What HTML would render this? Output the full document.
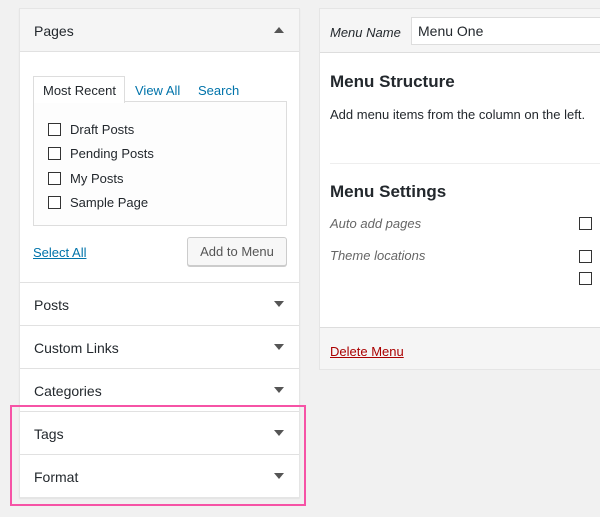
<!DOCTYPE html>
<html><head><style>
*{box-sizing:border-box;margin:0;padding:0}
body{width:600px;height:517px;background:#f1f1f1;font-family:"Liberation Sans",sans-serif;font-size:13px;color:#23282d;position:relative;overflow:hidden}
.a{position:absolute}
.lp{left:19px;top:8px;width:281px;height:490px;background:#fff;border:1px solid #e5e5e5;box-shadow:0 1px 1px rgba(0,0,0,.06)}
.sec{position:absolute;left:0;width:279px;height:43px;border-top:1px solid #e1e1e1;font-size:14px;padding:14px 0 0 14px}
.tri{position:absolute;right:15px;top:18px;width:0;height:0;border-left:5px solid transparent;border-right:5px solid transparent;border-top:6px solid #555}
.cb{position:absolute;width:13px;height:13px;border:1px solid #333;background:#fff}
</style></head><body>
<div class="a lp">
 <div class="a" style="left:0;top:0;width:279px;height:43px;background:#f5f5f5;border-bottom:1px solid #e1e1e1;font-size:14px;padding:14px 0 0 14px">Pages
  <div class="a" style="right:15px;top:18px;border-left:5px solid transparent;border-right:5px solid transparent;border-bottom:6px solid #555"></div></div>
 <div class="a" style="left:13px;top:67px;width:92px;height:27px;border:1px solid #ddd;border-bottom:none;background:#fff;z-index:2;padding:6px 0 0 9px">Most Recent</div>
 <div class="a" style="left:115px;top:74px;color:#0073aa">View All</div>
 <div class="a" style="left:178px;top:74px;color:#0073aa">Search</div>
 <div class="a" style="left:13px;top:92px;width:254px;height:125px;border:1px solid #ddd;background:#fdfdfd">
  <div class="cb" style="left:14px;top:21px"></div><div class="a" style="left:36px;top:20px">Draft Posts</div>
  <div class="cb" style="left:14px;top:45px"></div><div class="a" style="left:36px;top:44px">Pending Posts</div>
  <div class="cb" style="left:14px;top:70px"></div><div class="a" style="left:36px;top:69px">My Posts</div>
  <div class="cb" style="left:14px;top:94px"></div><div class="a" style="left:36px;top:93px">Sample Page</div>
 </div>
 <div class="a" style="left:13px;top:236px;color:#0073aa;text-decoration:underline">Select All</div>
 <div class="a" style="left:167px;top:228px;width:100px;height:29px;border:1px solid #ccc;border-radius:3px;background:#f7f7f7;box-shadow:0 1px 0 #ccc;text-align:center;padding-top:6px;color:#555">Add to Menu</div>
 <div class="sec" style="top:273px">Posts<div class="tri"></div></div>
 <div class="sec" style="top:316px">Custom Links<div class="tri"></div></div>
 <div class="sec" style="top:359px">Categories<div class="tri"></div></div>
 <div class="sec" style="top:402px">Tags<div class="tri"></div></div>
 <div class="sec" style="top:445px">Format<div class="tri"></div></div>
</div>
<div class="a" style="left:10px;top:405px;width:296px;height:101px;border:2px solid #f653a6"></div>
<div class="a" style="left:319px;top:8px;width:290px;height:362px;background:#fff;border:1px solid #e5e5e5">
 <div class="a" style="left:0;top:0;width:290px;height:44px;background:#f5f5f5;border-bottom:1px solid #ddd">
  <div class="a" style="left:10px;top:16px;font-style:italic;color:#23282d">Menu Name</div>
  <div class="a" style="left:91px;top:8px;width:200px;height:28px;border:1px solid #ddd;background:#fff;font-size:14px;padding:5px 0 0 6px">Menu One</div>
 </div>
 <div class="a" style="left:10px;top:63px;font-size:17px;font-weight:bold">Menu Structure</div>
 <div class="a" style="left:10px;top:98px">Add menu items from the column on the left.</div>
 <div class="a" style="left:10px;top:154px;width:280px;border-top:1px solid #eee"></div>
 <div class="a" style="left:10px;top:173px;font-size:17px;font-weight:bold">Menu Settings</div>
 <div class="a" style="left:10px;top:207px;font-style:italic;color:#666">Auto add pages</div>
 <div class="a" style="left:10px;top:239px;font-style:italic;color:#666">Theme locations</div>
 <div class="cb" style="left:259px;top:208px"></div>
 <div class="cb" style="left:259px;top:241px"></div>
 <div class="cb" style="left:259px;top:263px"></div>
 <div class="a" style="left:0;top:318px;width:290px;height:42px;background:#f5f5f5;border-top:1px solid #ddd">
  <div class="a" style="left:10px;top:16px;color:#a00;text-decoration:underline">Delete Menu</div>
 </div>
</div>
</body></html>
